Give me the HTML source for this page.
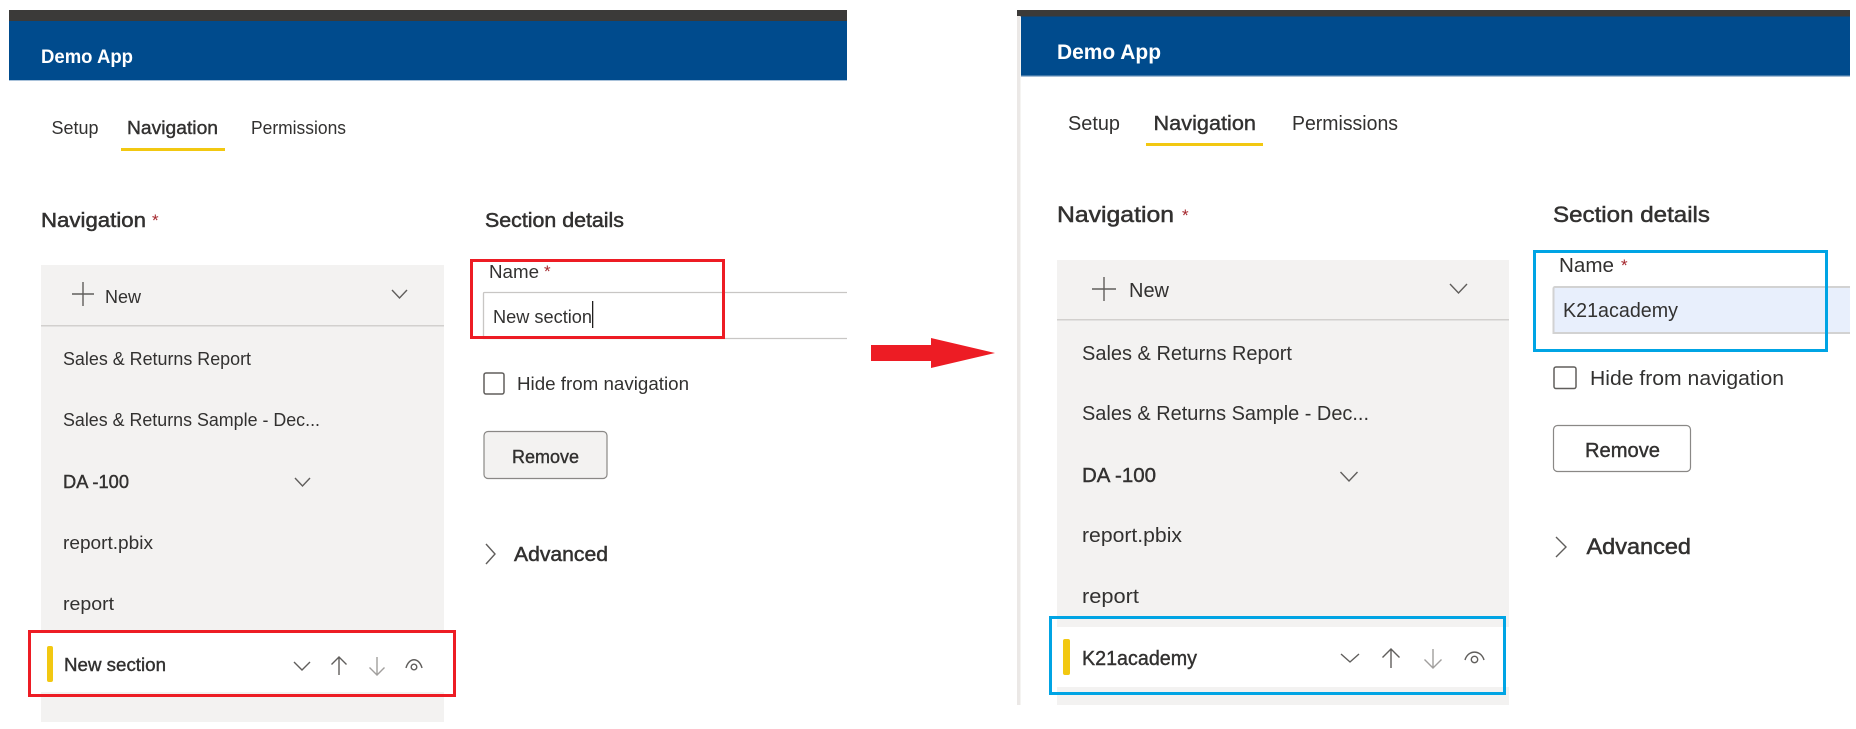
<!DOCTYPE html>
<html><head><meta charset="utf-8"><title>Demo App</title>
<style>
html,body{margin:0;padding:0;background:#fff;width:1856px;height:729px;overflow:hidden}
svg{display:block}
text{font-family:"Liberation Sans",sans-serif;fill:#323130;font-size:18.5px;filter:blur(.3px)}
.s{stroke:#323130;stroke-width:.4px}
.t{font-size:20.5px;stroke:#323130;stroke-width:.5px}
.w{fill:#fff;font-size:19px;font-weight:bold}
.g{fill:#a4262c;font-size:17px}
.r{font-size:20px}
.rt{font-size:22px}
.i{fill:none;stroke:#605e5c;stroke-width:1.4}
</style></head><body>
<svg width="1856" height="729" viewBox="0 0 1856 729" xmlns="http://www.w3.org/2000/svg">
<rect width="1856" height="729" fill="#fff"/>
<!-- LEFT -->
<rect x="9" y="10" width="838" height="11" fill="#3b3a39"/>
<rect x="9" y="21" width="838" height="59" fill="#004b8d"/>
<rect x="9" y="80" width="838" height="1" fill="#a9c2da"/>
<text class="w" x="41" y="63" textLength="92" lengthAdjust="spacingAndGlyphs">Demo App</text>
<text x="51.5" y="134" textLength="47" lengthAdjust="spacingAndGlyphs">Setup</text>
<text class="s" x="127" y="134" textLength="91" lengthAdjust="spacingAndGlyphs">Navigation</text>
<rect x="121" y="148" width="104" height="3" fill="#f2c811"/>
<text x="251" y="134" textLength="95" lengthAdjust="spacingAndGlyphs">Permissions</text>
<text class="t" x="41" y="227" textLength="105" lengthAdjust="spacingAndGlyphs">Navigation</text>
<text class="g" x="152" y="226">*</text>
<text class="t" x="485" y="227" textLength="139" lengthAdjust="spacingAndGlyphs">Section details</text>
<rect x="41" y="265" width="403" height="457" fill="#f3f2f1"/>
<rect x="41" y="325" width="403" height="1.5" fill="#d2d0ce"/>
<path d="M72 294H94M83 282V306" class="i"/>
<text x="105" y="303" textLength="36" lengthAdjust="spacingAndGlyphs">New</text>
<path d="M392 290l7.500 8 7.500-8" class="i"/>
<text x="63" y="365" textLength="188" lengthAdjust="spacingAndGlyphs">Sales &amp; Returns Report</text>
<text x="63" y="426" textLength="257" lengthAdjust="spacingAndGlyphs">Sales &amp; Returns Sample - Dec...</text>
<text class="s" x="63" y="488" textLength="66" lengthAdjust="spacingAndGlyphs">DA -100</text>
<path d="M295 478l7.500 8 7.500-8" class="i"/>
<text x="63" y="549" textLength="90" lengthAdjust="spacingAndGlyphs">report.pbix</text>
<text x="63" y="610" textLength="51" lengthAdjust="spacingAndGlyphs">report</text>
<rect x="41" y="633" width="403" height="59" fill="#fff"/>
<rect x="47" y="646" width="6" height="36" rx="2" fill="#f2c811"/>
<text class="s" x="64" y="671" textLength="102" lengthAdjust="spacingAndGlyphs">New section</text>
<path d="M294 662l8 8 8-8" class="i"/>
<path d="M339 675V657M331.500 664.500L339 657l7.500 7.500" class="i"/>
<path d="M377 657V675M369.500 667.500L377 675l7.500-7.500" fill="none" stroke="#a19f9d" stroke-width="1.4"/>
<path d="M406 668c3-11 13-11 16 0" class="i"/><circle cx="414" cy="667" r="2.800" class="i"/>
<rect x="29.500" y="631.500" width="425" height="64" fill="none" stroke="#ed1c24" stroke-width="3"/>
<text x="489" y="278" textLength="50" lengthAdjust="spacingAndGlyphs">Name</text>
<text class="g" x="544" y="277">*</text>
<path d="M847 292.500H484.500a1 1 0 0 0-1 1V338.500H847" fill="#fff" stroke="#c8c6c4" stroke-width="1.300"/>
<text x="493" y="323" textLength="99" lengthAdjust="spacingAndGlyphs">New section</text>
<rect x="592" y="301" width="1.300" height="27" fill="#201f1e"/>
<rect x="471.500" y="260.500" width="252" height="77" fill="none" stroke="#ed1c24" stroke-width="3"/>
<rect x="484" y="373" width="20" height="21" rx="2" fill="#fff" stroke="#605e5c" stroke-width="1.500"/>
<text x="517" y="390" textLength="172" lengthAdjust="spacingAndGlyphs">Hide from navigation</text>
<rect x="484" y="431.500" width="123" height="47" rx="4" fill="#f3f2f1" stroke="#8a8886" stroke-width="1.200"/>
<text class="s" x="512" y="463" textLength="67" lengthAdjust="spacingAndGlyphs">Remove</text>
<path d="M486 544l9 10-9 10" class="i"/>
<text class="t" x="514" y="561" textLength="94" lengthAdjust="spacingAndGlyphs">Advanced</text>
<!-- ARROW -->
<path d="M871 345H931V338L995 353L931 368V361H871Z" fill="#ed1c24"/>
<!-- RIGHT -->
<rect x="1017" y="10" width="833" height="6.500" fill="#3b3a39"/>
<rect x="1017" y="16" width="3.500" height="689" fill="#ebe8e6"/>
<rect x="1021" y="16.500" width="829" height="59" fill="#004b8d"/>
<rect x="1021" y="75.500" width="829" height="1.200" fill="#7fa3c4"/>
<text class="w" x="1057" y="59" textLength="104" lengthAdjust="spacingAndGlyphs" style="font-size:21px">Demo App</text>
<text class="r" x="1068" y="130" textLength="52" lengthAdjust="spacingAndGlyphs">Setup</text>
<text class="r s" x="1153.500" y="130" textLength="102.500" lengthAdjust="spacingAndGlyphs">Navigation</text>
<text class="r" x="1292" y="130" textLength="106" lengthAdjust="spacingAndGlyphs">Permissions</text>
<rect x="1146" y="143" width="117" height="3" fill="#f2c811"/>
<text class="t rt" x="1057" y="222" textLength="117" lengthAdjust="spacingAndGlyphs">Navigation</text>
<text class="g" x="1182" y="221">*</text>
<text class="t rt" x="1553" y="222" textLength="157" lengthAdjust="spacingAndGlyphs">Section details</text>
<rect x="1057" y="260" width="452" height="445" fill="#f3f2f1"/>
<rect x="1057" y="319" width="452" height="1.500" fill="#d2d0ce"/>
<path d="M1092 289H1116M1104 277V301" class="i"/>
<text class="r" x="1129" y="297" textLength="40" lengthAdjust="spacingAndGlyphs">New</text>
<path d="M1450 284l8.500 9 8.500-9" class="i"/>
<text class="r" x="1082" y="360" textLength="210" lengthAdjust="spacingAndGlyphs">Sales &amp; Returns Report</text>
<text class="r" x="1082" y="420" textLength="287" lengthAdjust="spacingAndGlyphs">Sales &amp; Returns Sample - Dec...</text>
<text class="r s" x="1082" y="482" textLength="74" lengthAdjust="spacingAndGlyphs">DA -100</text>
<path d="M1340.500 472l8.500 9 8.500-9" class="i"/>
<text class="r" x="1082" y="542" textLength="100" lengthAdjust="spacingAndGlyphs">report.pbix</text>
<text class="r" x="1082" y="603" textLength="57" lengthAdjust="spacingAndGlyphs">report</text>
<rect x="1057" y="627" width="452" height="60" fill="#fff"/>
<rect x="1063" y="639" width="7" height="36" rx="2" fill="#f2c811"/>
<text class="r s" x="1082" y="665" textLength="115" lengthAdjust="spacingAndGlyphs">K21academy</text>
<path d="M1341 654l9 8 9-8" class="i"/>
<path d="M1391 668V649M1382.500 657.500L1391 649l8.500 8.500" class="i"/>
<path d="M1433 649V668M1424.500 659.500L1433 668l8.500-8.500" fill="none" stroke="#a19f9d" stroke-width="1.4"/>
<path d="M1465 660c3-10.500 16-10.500 19 0" class="i"/><circle cx="1474.500" cy="659.500" r="3.200" class="i"/>
<rect x="1050.500" y="617.500" width="454" height="76" fill="none" stroke="#00a4e4" stroke-width="3"/>
<text class="r" x="1559" y="272" textLength="55" lengthAdjust="spacingAndGlyphs">Name</text>
<text class="g" x="1621" y="271">*</text>
<path d="M1850 287H1555a1.500 1.500 0 0 0-1.500 1.500V333H1850" fill="#e8effc" stroke="#d2d2d2" stroke-width="2"/>
<text class="r" x="1563" y="317" textLength="115" lengthAdjust="spacingAndGlyphs">K21academy</text>
<rect x="1534.500" y="251.500" width="292" height="99" fill="none" stroke="#00a4e4" stroke-width="3"/>
<rect x="1554" y="367" width="22" height="21.500" rx="2" fill="#fff" stroke="#605e5c" stroke-width="1.500"/>
<text class="r" x="1590" y="385" textLength="194" lengthAdjust="spacingAndGlyphs">Hide from navigation</text>
<rect x="1553.500" y="425.500" width="137" height="46" rx="4" fill="#fff" stroke="#8a8886" stroke-width="1.200"/>
<text class="r s" x="1585" y="457" textLength="75" lengthAdjust="spacingAndGlyphs">Remove</text>
<path d="M1556 537l10 10-10 10" class="i"/>
<text class="t rt" x="1586.500" y="554" textLength="104.500" lengthAdjust="spacingAndGlyphs">Advanced</text>
</svg>
</body></html>
